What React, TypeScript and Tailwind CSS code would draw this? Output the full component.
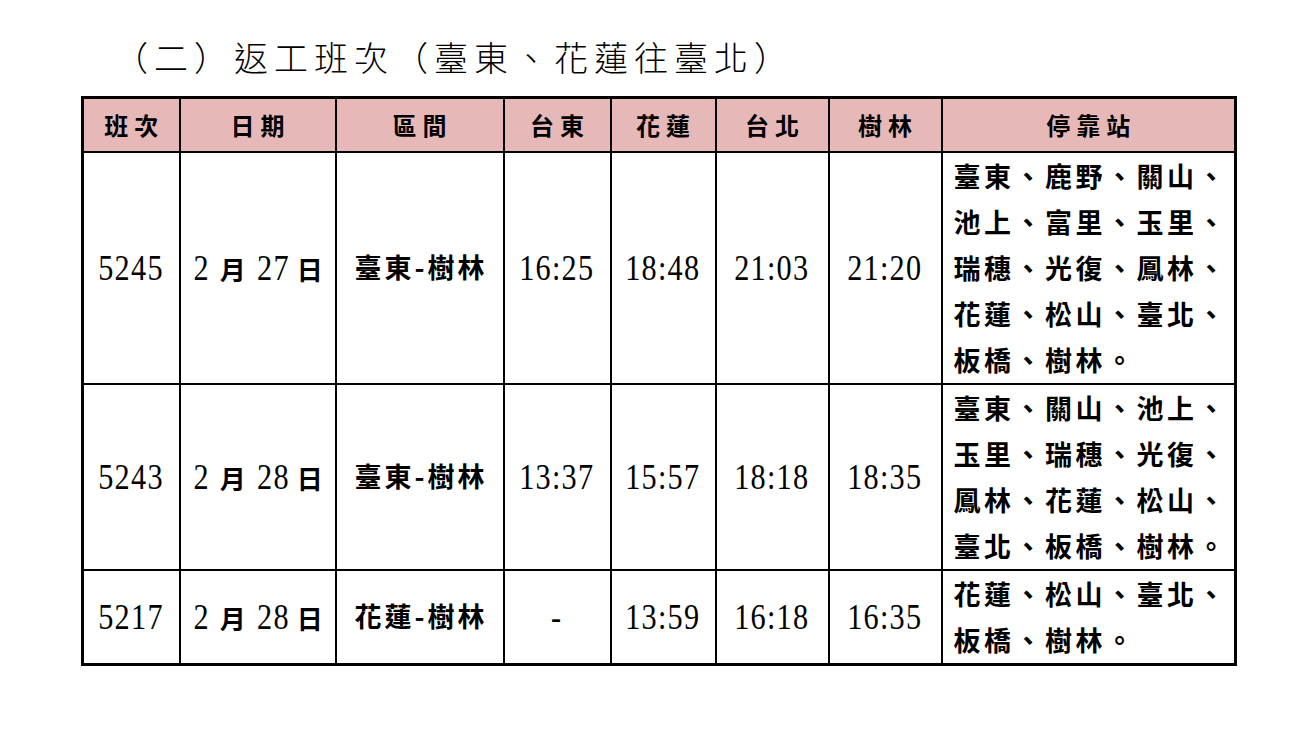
import React from 'react';

type Row = {
  no: string;
  month: string;
  day: string;
  route: string;
  taitung: string;
  hualien: string;
  taipei: string;
  shulin: string;
  stops: string[];
};

const rows: Row[] = [
  {
    no: '5245',
    month: '2',
    day: '27',
    route: '臺東-樹林',
    taitung: '16:25',
    hualien: '18:48',
    taipei: '21:03',
    shulin: '21:20',
    stops: ['臺東、鹿野、關山、', '池上、富里、玉里、', '瑞穗、光復、鳳林、', '花蓮、松山、臺北、', '板橋、樹林。']
  },
  {
    no: '5243',
    month: '2',
    day: '28',
    route: '臺東-樹林',
    taitung: '13:37',
    hualien: '15:57',
    taipei: '18:18',
    shulin: '18:35',
    stops: ['臺東、關山、池上、', '玉里、瑞穗、光復、', '鳳林、花蓮、松山、', '臺北、板橋、樹林。']
  },
  {
    no: '5217',
    month: '2',
    day: '28',
    route: '花蓮-樹林',
    taitung: '-',
    hualien: '13:59',
    taipei: '16:18',
    shulin: '16:35',
    stops: ['花蓮、松山、臺北、', '板橋、樹林。']
  }
];

const headers = ['班次', '日期', '區間', '台東', '花蓮', '台北', '樹林', '停靠站'];
const widths = ['w-[97px]', 'w-[156px]', 'w-[168px]', 'w-[107px]', 'w-[105px]', 'w-[113px]', 'w-[113px]', 'w-[294px]'];

const cjk = "font-['Noto_Sans_CJK_TC',sans-serif]";
const num = "font-['Liberation_Serif','Noto_Sans_CJK_TC',serif]";

// tall narrow digits, like the Ming-style half-width numerals in the original
function Num({ children }: { children: React.ReactNode }) {
  return (
    <span className={`inline-block scale-x-[0.84] text-[36px] leading-[40px] tracking-[1.5px] ${num}`}>
      {children}
    </span>
  );
}

export default function App() {
  return (
    <div className="w-[1300px] h-[734px] bg-white text-black">
      <div className={`pt-[36px] pl-[114px] h-[96px] text-[34px] leading-[42px] tracking-[6px] ${cjk} font-light`}>
        （二）返工班次（臺東、花蓮往臺北）
      </div>

      <table className="ml-[81px] w-[1155px] table-fixed border-collapse border-[3px] border-black">
        <colgroup>
          {widths.map((w, i) => (
            <col key={i} className={w} />
          ))}
        </colgroup>
        <thead>
          <tr className="bg-[#e6b8b7] h-[54px]">
            {headers.map((h) => (
              <th
                key={h}
                className={`border-2 border-black text-center text-[24px] font-bold tracking-[6px] pl-[6px] ${cjk}`}
              >
                {h}
              </th>
            ))}
          </tr>
        </thead>
        <tbody>
          {rows.map((r) => (
            <tr key={r.no}>
              <td className="border-2 border-black text-center">
                <Num>{r.no}</Num>
              </td>
              <td className="border-2 border-black text-center whitespace-nowrap">
                <Num>{r.month}</Num>
                <span className={`text-[26px] font-bold mx-[8px] ${cjk}`}>月</span>
                <Num>{r.day}</Num>
                <span className={`text-[26px] font-bold ml-[4px] ${cjk}`}>日</span>
              </td>
              <td className={`border-2 border-black text-center text-[27px] font-bold tracking-[3px] pl-[3px] whitespace-nowrap ${cjk}`}>
                {r.route}
              </td>
              <td className="border-2 border-black text-center">
                <Num>{r.taitung}</Num>
              </td>
              <td className="border-2 border-black text-center">
                <Num>{r.hualien}</Num>
              </td>
              <td className="border-2 border-black text-center">
                <Num>{r.taipei}</Num>
              </td>
              <td className="border-2 border-black text-center">
                <Num>{r.shulin}</Num>
              </td>
              <td className={`border-2 border-black pl-[11px] text-[27px] leading-[46px] font-bold tracking-[3.5px] whitespace-nowrap ${cjk}`}>
                {r.stops.map((s, i) => (
                  <div key={i}>{s}</div>
                ))}
              </td>
            </tr>
          ))}
        </tbody>
      </table>
    </div>
  );
}
